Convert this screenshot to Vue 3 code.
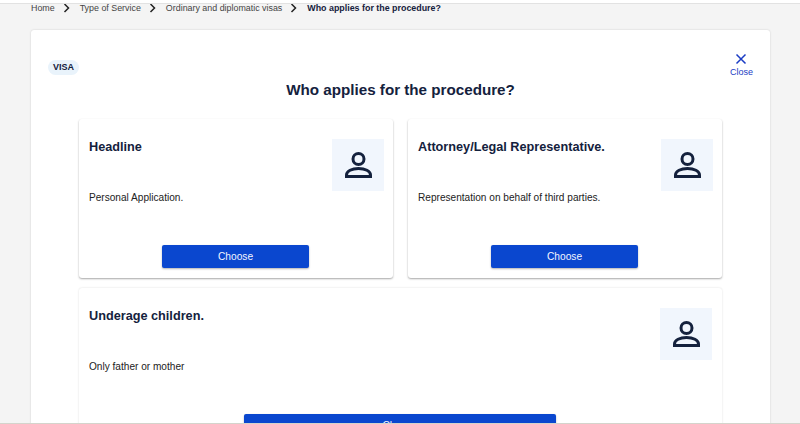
<template>
    <div class="page">
        <nav class="crumbs">
            <template v-for="(crumb, i) in crumbs" :key="crumb">
                <span :class="{ current: i === crumbs.length - 1 }">{{ crumb }}</span>
                <svg v-if="i < crumbs.length - 1" class="chevron" viewBox="0 0 8 10" width="8" height="10">
                    <path d="M1.5 1 5.5 5 1.5 9" fill="none" stroke="#222" stroke-width="1.5" />
                </svg>
            </template>
        </nav>

        <main class="panel">
            <div class="panel-head">
                <span class="chip">VISA</span>
                <button class="close" type="button">
                    <svg viewBox="0 0 12 12" width="12" height="12">
                        <path d="M1.5 1.5 10.500 10.500M10.500 1.500 1.500 10.500" fill="none" stroke="#1a3cc4" stroke-width="1.5" />
                    </svg>
                    <span>Close</span>
                </button>
            </div>
            <h1 class="title">Who applies for the procedure?</h1>

            <div class="options">
                <article v-for="opt in options" :key="opt.title" class="option" :class="{ wide: opt.wide }">
                    <div class="option-top">
                        <h2>{{ opt.title }}</h2>
                        <div class="avatar">
                            <svg viewBox="0 0 27 26" width="27" height="26">
                                <circle cx="13.5" cy="7" r="5.500" fill="none" stroke="#14213d" stroke-width="3" />
                                <path d="M1.500 24.500V23c0-4 5.500-6.500 12-6.500s12 2.500 12 6.500v1.500Z" fill="none" stroke="#14213d" stroke-width="3" />
                            </svg>
                        </div>
                    </div>
                    <p>{{ opt.text }}</p>
                    <button class="choose" type="button">Choose</button>
                </article>
            </div>
        </main>
    </div>
</template>

<script setup>
const crumbs = ['Home', 'Type of Service', 'Ordinary and diplomatic visas', 'Who applies for the procedure?'];

const options = [
    { title: 'Headline', text: 'Personal Application.' },
    { title: 'Attorney/Legal Representative.', text: 'Representation on behalf of third parties.' },
    { title: 'Underage children.', text: 'Only father or mother', wide: true }
];
</script>

<style>
html,
body {
    margin: 0;
    overflow: hidden;
}
</style>

<style scoped>
.page {
    height: 421px;
    overflow: hidden;
    box-sizing: border-box;
    margin-top: 3px;
    border-top: 1px solid #e2e2e2;
    border-bottom: 1px solid #d4d4cc;
    background: #f4f4f4;
    font-family: "Liberation Sans", Arial, sans-serif;
    color: #14213d;
}

.crumbs {
    display: flex;
    align-items: center;
    height: 8px;
    padding-left: 31px;
    font-size: 8.9px;
    color: #444;
}

.chevron {
    margin: 0 9px 0 8px;
}

.current {
    font-weight: 700;
    color: #14213d;
}

.panel {
    margin: 18px 30px 0 31px;
    padding: 30px 17px 0;
    background: #fff;
    border-radius: 3px;
    box-shadow: 0 0 2px rgba(0, 0, 0, 0.18);
}

.panel-head {
    display: flex;
    justify-content: space-between;
    align-items: flex-start;
    height: 30px;
}

.chip {
    padding: 2px 5px;
    border-radius: 8px;
    background: #e9f3fb;
    font-size: 9px;
    line-height: 11px;
    font-weight: 700;
}

.close {
    display: flex;
    flex-direction: column;
    align-items: center;
    gap: 2px;
    margin: -7px 0 0;
    padding: 0;
    border: 0;
    background: none;
    font: inherit;
    font-size: 9px;
    color: #1a3cc4;
}

.title {
    margin: -10px 0 0;
    font-size: 15.2px;
    line-height: 20px;
    text-align: center;
}

.options {
    display: grid;
    grid-template-columns: 314px 314px;
    gap: 10px 15px;
    margin: 19px 31px 0;
}

.option {
    display: flex;
    flex-direction: column;
    height: 159px;
    box-sizing: border-box;
    padding: 20px 9px 0 10px;
    background: #fff;
    border-radius: 3px;
    box-shadow: 0 1px 2px rgba(0, 0, 0, 0.35);
}

.option.wide {
    grid-column: 1 / 3;
    padding-right: 10px;
    box-shadow: 0 0 2px rgba(0, 0, 0, 0.15);
}

.option-top {
    display: flex;
    justify-content: space-between;
    align-items: flex-start;
}

.option h2 {
    margin: 0;
    font-size: 12.7px;
    line-height: 16px;
}

.avatar {
    display: flex;
    align-items: center;
    justify-content: center;
    width: 52px;
    height: 52px;
    background: #f1f6fd;
}

.option p {
    margin: 1px 0 0;
    font-size: 10.1px;
    line-height: 12px;
    color: #222;
}

.choose {
    align-self: flex-start;
    width: 147px;
    height: 23px;
    margin: 41px 0 0 73px;
    padding: 0;
    border: 0;
    border-radius: 2px;
    background: #0a47cf;
    box-shadow: 0 1px 2px rgba(0, 0, 0, 0.3);
    font: inherit;
    font-size: 10.2px;
    color: #f2f5ff;
}

.wide .choose {
    width: 312px;
    margin-left: 155px;
}
</style>
